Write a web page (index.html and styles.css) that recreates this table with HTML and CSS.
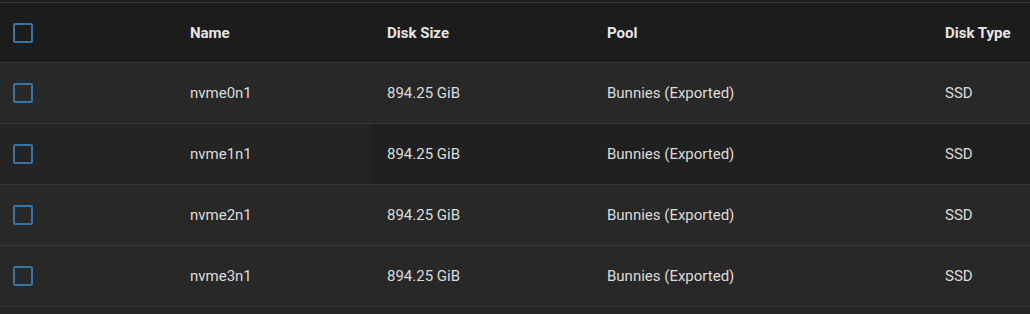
FILE: index.html
```html
<!DOCTYPE html>
<html>
<head>
<meta charset="utf-8">
<link rel="stylesheet" href="styles.css">
</head>
<body>
<div class="panel">
  <table class="disks">
    <colgroup>
      <col class="c-check">
      <col class="c-name">
      <col class="c-size">
      <col class="c-pool">
      <col class="c-type">
    </colgroup>
    <thead>
      <tr>
        <th class="check"><span class="box"></span></th>
        <th>Name</th>
        <th>Disk Size</th>
        <th>Pool</th>
        <th>Disk Type</th>
      </tr>
    </thead>
    <tbody>
      <tr>
        <td class="check"><span class="box"></span></td>
        <td>nvme0n1</td>
        <td>894.25 GiB</td>
        <td>Bunnies (Exported)</td>
        <td>SSD</td>
      </tr>
      <tr class="hover">
        <td class="check"><span class="box"></span></td>
        <td>nvme1n1</td>
        <td class="hot">894.25 GiB</td>
        <td class="hot">Bunnies (Exported)</td>
        <td class="hot">SSD</td>
      </tr>
      <tr>
        <td class="check"><span class="box"></span></td>
        <td>nvme2n1</td>
        <td>894.25 GiB</td>
        <td>Bunnies (Exported)</td>
        <td>SSD</td>
      </tr>
      <tr>
        <td class="check"><span class="box"></span></td>
        <td>nvme3n1</td>
        <td>894.25 GiB</td>
        <td>Bunnies (Exported)</td>
        <td>SSD</td>
      </tr>
    </tbody>
  </table>
</div>
</body>
</html>
```
FILE: styles.css
```css
html, body {
  margin: 0;
  padding: 0;
  background: #262626;
}
body {
  font-family: Roboto, "Liberation Sans", sans-serif;
  width: 1030px;
  height: 314px;
  overflow: hidden;
}
.panel {
  background: #1c1c1c;
  padding-top: 2px;
}
.disks {
  width: 1030px;
  border-collapse: collapse;
  table-layout: fixed;
  border-top: 1px solid #343434;
}
.c-check { width: 175px; }
.c-name { width: 197px; }
.c-size { width: 220px; }
.c-pool { width: 338px; }
.c-type { width: 100px; }

.disks th, .disks td {
  padding: 0 0 0 15px;
  text-align: left;
  white-space: nowrap;
  font-size: 15px;
  vertical-align: middle;
}
.disks th {
  height: 59px;
  font-weight: 700;
  color: #e6e6e6;
  background: #1c1c1c;
  border-bottom: 1px solid #363636;
}
.disks td {
  height: 60px;
  color: #dcdcdc;
  background: #282828;
  border-bottom: 1px solid #363636;
}
.disks tr.hover td {
  background: #242424;
}
.disks tr.hover td.hot {
  background: #202020;
}
.disks .check {
  padding-left: 13px;
}
.box {
  display: block;
  width: 16px;
  height: 16px;
  border: 2px solid #3673a6;
  border-radius: 2px;
}
```
